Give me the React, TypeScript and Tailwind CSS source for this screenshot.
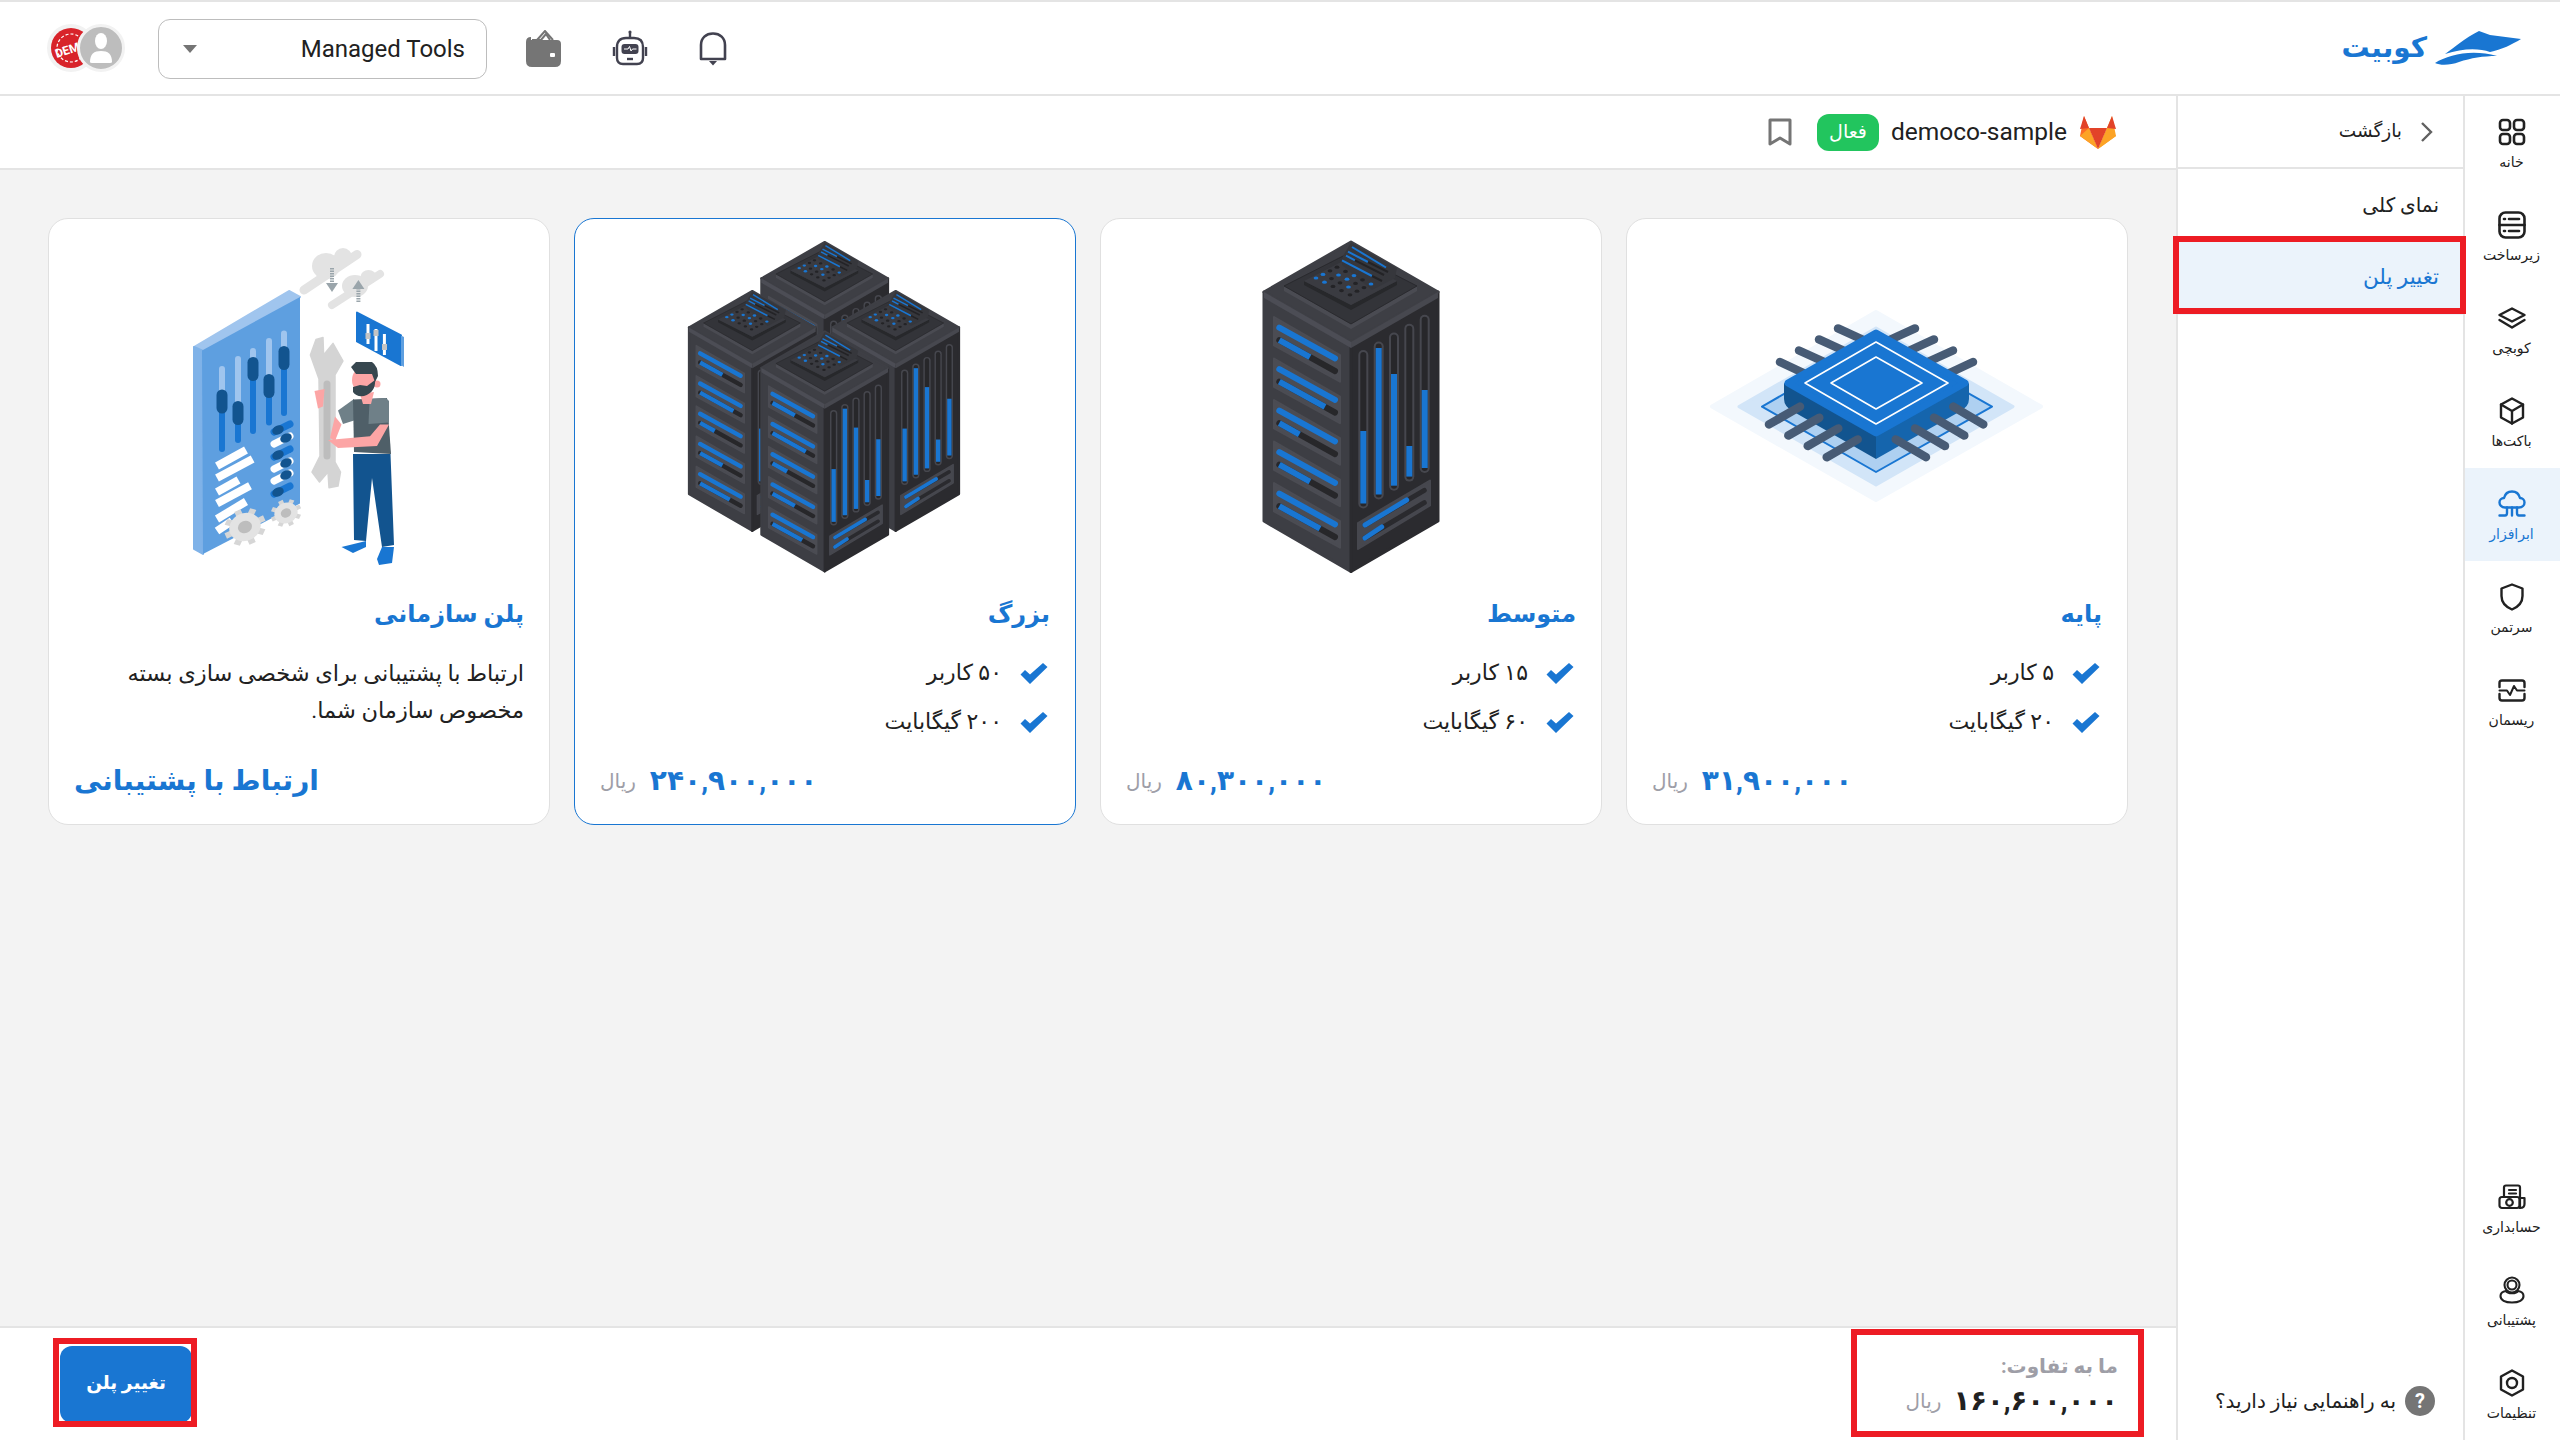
import React from "react";

const BLUE = "#1976d2";

function Pin({ d }: { d: number[] }) {
  return <line x1={d[0]} y1={d[1]} x2={d[2]} y2={d[3]} stroke="#475b75" strokeWidth={8.5} strokeLinecap="round" />;
}

function Chip() {
  const back = [
    [78, 128, 110, 143], [97, 116.5, 129, 131], [117, 105.4, 149, 120], [136, 94.4, 168, 109],
    [213, 94.4, 181, 109], [232, 105.4, 200, 120], [251, 116.5, 219, 131], [271, 128, 239, 143],
  ];
  const front = [
    [67, 190.4, 98, 172.6], [86.3, 201.5, 117.3, 183.7], [105.7, 212, 136.3, 194.4], [124.7, 223.2, 155.7, 205.4],
    [281.3, 190.4, 251.3, 172.6], [262.3, 201.5, 232, 183.7], [243, 212, 213, 194.4], [224, 223.2, 193.7, 205.4],
  ];
  return (
    <svg width="350" height="350" viewBox="0 0 350 350">
      <polygon points="10,172.6 174,78 339,172.6 174,266" fill="#f3f8fd" stroke="#f3f8fd" strokeWidth="4" strokeLinejoin="round" />
      <polygon points="37,172.6 174,94 311,172.6 174,251" fill="#d2e5f8" stroke="#d2e5f8" strokeWidth="3" strokeLinejoin="round" />
      <polygon points="60,172.6 174,107 290,172.6 174,238" fill="#aed0f1" stroke={BLUE} strokeWidth="2" strokeLinejoin="round" />
      {back.map((p, i) => <Pin key={i} d={p} />)}
      <path d="M82 149 L174 201.5 V225 L92 178 Q82 173 82 165 Z" fill="#12548f" />
      <path d="M267 149 L174 201.5 V225 L257 178 Q267 173 267 165 Z" fill="#1565ad" />
      <polygon points="86,149 174,99 263,149 174,199" fill={BLUE} stroke={BLUE} strokeWidth="7" strokeLinejoin="round" />
      <polygon points="103,149 174,108 246,149 174,190" fill="none" stroke="#fff" strokeWidth="1.6" strokeLinejoin="round" />
      <polygon points="129,149 174,123 220,149 174,175" fill="none" stroke="#fff" strokeWidth="1.6" strokeLinejoin="round" />
      {front.map((p, i) => <Pin key={i} d={p} />)}
    </svg>
  );
}

function Tower() {
  const panels = [0.55, 0.82, 0.36, 0.55, 0.73];
  const slots = [
    [187.3, 121, 269.5, 197], [202.7, 112.5, 260.4, 114], [218, 103.5, 251.7, 140],
    [233.3, 94.8, 242.6, 212], [248.7, 85.7, 234, 156],
  ];
  const blues = ["0-0", "1-0", "0-1", "3-1", "1-2", "2-2", "4-3", "2-3", "3-4"];
  const dots: React.ReactNode[] = [];
  for (let i = 0; i < 5; i++) {
    for (let j = 0; j < 4; j++) {
      const x = 140 + i * 8.5 + j * 7;
      const y = 44 + i * 4.2 - j * 3.6;
      dots.push(<ellipse key={`${i}-${j}`} cx={x} cy={y} rx="2.4" ry="1.6" fill={blues.includes(`${i}-${j}`) ? BLUE : "#232326"} />);
    }
  }
  return (
    <g>
      <polygon points="88,58 175,108 175,337.5 88,287" fill="#3d3e44" stroke="#3d3e44" strokeWidth="3" strokeLinejoin="round" />
      <polygon points="175,108 262,58 262,287 175,337.5" fill="#2b2b2f" stroke="#2b2b2f" strokeWidth="3" strokeLinejoin="round" />
      <polygon points="175,8 262,58 175,108 88,58" fill="#3e3f45" stroke="#3e3f45" strokeWidth="3" strokeLinejoin="round" />
      <polygon points="88,58 175,108 175,114 88,64" fill="#4c4d55" />
      <polygon points="262,58 175,108 175,114 262,64" fill="#47484f" />
      <polygon points="108,57 175,95 241,57 241,52 175,90 108,52" fill="#4a4b52" />
      <polygon points="108,52 175,18 241,52 175,90" fill="#333439" stroke="#26262a" strokeWidth="0.8" />
      <polygon points="128,51 175,76 221,51 221,47 175,71 128,47" fill="#27282b" />
      <polygon points="128,47 175,23 221,47 175,71" fill="#3a3b41" />
      <polygon points="167,22 175,8.6 221,34 219,44 196,56 166,31" fill="#36373c" />
      <g stroke={BLUE} strokeWidth="2">
        <line x1="176" y1="13" x2="210" y2="33.5" />
        <line x1="172" y1="17.7" x2="192" y2="28" />
        <line x1="170" y1="21.6" x2="179" y2="26.4" />
        <line x1="166" y1="26.4" x2="196" y2="42" />
      </g>
      <g stroke="#232326" strokeWidth="2">
        <line x1="192" y1="28" x2="212" y2="38" />
        <line x1="179" y1="26.4" x2="208" y2="41" />
        <line x1="196" y1="42" x2="206" y2="47" />
      </g>
      {dots}
      {panels.map((f, i) => {
        const o = i * 41.5;
        const x1 = 103.3, x2 = 159, mid = x1 + (x2 - x1) * f;
        const yAt = (b: number, x: number) => b + ((x - x1) / (x2 - x1)) * 30.8 + o;
        return (
          <g key={i}>
            <polygon points={`98,${83 + o} 164,${121 + o} 164,${147.7 + o} 98,${111.4 + o}`} fill="#4b4c53" stroke="#4b4c53" strokeWidth="2" strokeLinejoin="round" />
            <line x1={x1} y1={yAt(93.6, x1)} x2={x2} y2={yAt(93.6, x2)} stroke={BLUE} strokeWidth="6" strokeLinecap="round" />
            <line x1={x1} y1={yAt(106.2, x1)} x2={x2} y2={yAt(106.2, x2)} stroke="#27272a" strokeWidth="6" strokeLinecap="round" />
            <line x1={x1} y1={yAt(106.2, x1)} x2={mid} y2={yAt(106.2, mid)} stroke={BLUE} strokeWidth="6" />
          </g>
        );
      })}
      {slots.map((s, i) => (
        <g key={i}>
          <line x1={s[0]} y1={s[1]} x2={s[0]} y2={s[2]} stroke="#46474e" strokeWidth="10" strokeLinecap="round" />
          <line x1={s[0]} y1={s[1]} x2={s[0]} y2={s[2]} stroke="#27272a" strokeWidth="6" strokeLinecap="round" />
          <line x1={s[0]} y1={s[3]} x2={s[0]} y2={s[2]} stroke={BLUE} strokeWidth="6" />
        </g>
      ))}
      <polygon points="182,289 254,246.5 254,271.4 182,315" fill="#46474e" stroke="#46474e" strokeWidth="2" strokeLinejoin="round" />
      <line x1="189" y1="291" x2="248.3" y2="256.4" stroke="#2a2a2e" strokeWidth="5" strokeLinecap="round" />
      <line x1="189" y1="304" x2="248.3" y2="268.7" stroke="#2a2a2e" strokeWidth="5" strokeLinecap="round" />
      <line x1="189" y1="291" x2="230.7" y2="266" stroke={BLUE} strokeWidth="5" strokeLinecap="round" />
      <line x1="189" y1="304" x2="205.7" y2="293" stroke={BLUE} strokeWidth="5" strokeLinecap="round" />
    </g>
  );
}

function Single() {
  return (
    <svg width="350" height="350" viewBox="0 0 350 350">
      <Tower />
    </svg>
  );
}

function Cluster() {
  const s = 0.728;
  const at = (x: number, y: number) => `translate(${x - 175 * s} ${y - 8 * s}) scale(${s})`;
  return (
    <svg width="350" height="350" viewBox="0 0 350 350">
      <g transform={at(174.7, 8)}><Tower /></g>
      <g transform={at(102.3, 57)}><Tower /></g>
      <g transform={at(245.7, 57)}><Tower /></g>
      <g transform={at(174.7, 97.5)}><Tower /></g>
    </svg>
  );
}

function Gear({ x, y, r }: { x: number; y: number; r: number }) {
  const teeth = 8;
  return (
    <g transform={`translate(${x} ${y}) rotate(-25) scale(1 0.85)`}>
      {Array.from({ length: teeth }).map((_, i) => (
        <rect key={i} x={-r * 0.18} y={-r * 1.12} width={r * 0.36} height={r * 0.4} fill="#d6d6d6" transform={`rotate(${(i * 360) / teeth})`} />
      ))}
      <circle r={r * 0.85} fill="#e3e3e3" />
      <circle r={r * 0.38} fill="#bdbdbd" />
    </g>
  );
}

function Org() {
  const sliders = [
    [98, 135, 215, 167.5], [114, 125, 206, 179], [129, 117, 197, 135], [145, 107, 188.5, 152], [160, 99.5, 179, 124],
  ];
  const lines = [
    [93, 232, 122, 216], [93, 244, 128.6, 225], [93, 258, 114.5, 246], [93, 269.5, 126, 251.7], [93, 285, 122, 267.5], [93, 297, 108, 287],
  ];
  const toggles: [number, boolean][] = [[194, true], [206, false], [219, true], [231, false], [243, false], [256, true]];
  return (
    <svg width="350" height="350" viewBox="0 0 350 350">
      <line x1="180" y1="56" x2="233" y2="20.5" stroke="#e3e3e3" strokeWidth="9" strokeLinecap="round" />
      <ellipse cx="202" cy="32" rx="14" ry="13" fill="#e3e3e3" />
      <ellipse cx="219" cy="23" rx="9" ry="9" fill="#e3e3e3" />
      <line x1="208" y1="71" x2="256" y2="40" stroke="#e3e3e3" strokeWidth="8" strokeLinecap="round" />
      <ellipse cx="231" cy="52" rx="13" ry="11" fill="#e3e3e3" />
      <ellipse cx="244.5" cy="43" rx="8" ry="7" fill="#e3e3e3" />
      <line x1="208" y1="34" x2="208" y2="50" stroke="#9aa5ab" strokeWidth="4" strokeDasharray="1.5 1" />
      <polygon points="202,49 214,49 208,58" fill="#9aa5ab" />
      <line x1="234.4" y1="54" x2="234.4" y2="69" stroke="#9aa5ab" strokeWidth="4" strokeDasharray="1.5 1" />
      <polygon points="228.4,55 240.4,55 234.4,46" fill="#9aa5ab" />

      <polygon points="70,113 165,57 176,63 78,116.5" fill="#a0c5ee" stroke="#a0c5ee" strokeWidth="2" strokeLinejoin="round" />
      <polygon points="70,113 78,116.5 79,320 70,315" fill="#7fb2e8" stroke="#7fb2e8" strokeWidth="2" strokeLinejoin="round" />
      <polygon points="78,116.5 176,63 176,269.5 79,320" fill="#5e9fe0" />
      {sliders.map((s, i) => (
        <g key={i}>
          <line x1={s[0]} y1={s[1]} x2={s[0]} y2={s[3]} stroke="#a0c5ee" strokeWidth="6" strokeLinecap="round" />
          <line x1={s[0]} y1={s[3]} x2={s[0]} y2={s[2]} stroke={BLUE} strokeWidth="6" strokeLinecap="round" />
          <rect x={s[0] - 5.5} y={s[3] - 12} width="11" height="24" rx="5.5" fill="#12548f" />
        </g>
      ))}
      {lines.map((l, i) => (
        <line key={i} x1={l[0]} y1={l[1]} x2={l[2]} y2={l[3]} stroke="#fff" strokeWidth="8" />
      ))}
      {toggles.map(([y, b], i) => (
        <g key={i}>
          <line x1="150" y1={y + 4} x2="166" y2={y - 4} stroke={b ? BLUE : "#fff"} strokeWidth="7" strokeLinecap="round" />
          <ellipse cx={b ? 154 : 162} cy={b ? y + 2 : y - 2} rx="6" ry="4.5" fill="#12548f" transform={`rotate(-25 ${b ? 154 : 162} ${b ? y + 2 : y - 2})`} />
        </g>
      ))}
      <Gear x={121} y={293} r={19} />
      <Gear x={162} y={279} r={14} />

      <polygon points="192,105.4 199,103.5 199.6,121 209,109.4 219,127 211,141 211,228 216.5,238 214,252 205,253.7 204,238 195.5,248 188,238 196,222 195,145 186.4,121" fill="#d4d4d4" stroke="#d4d4d4" strokeLinejoin="round" strokeWidth="1.5" />
      <line x1="203" y1="150" x2="203" y2="222" stroke="#bdbdbd" strokeWidth="7" strokeLinecap="round" />

      <polygon points="229,220 266.5,220 270,311 258,313 248,244 242,307 230,306" fill="#12548f" />
      <polygon points="217.5,313 242,307 242,313 229,319" fill={BLUE} />
      <polygon points="258,313 270,313 268,329 255,331 253,325" fill={BLUE} />
      <polygon points="214,176.6 230,165 230,186.5 219,190" fill="#6f8088" />
      <polygon points="229,165.5 263,164 267,220 230,218" fill="#4f5f68" />
      <polygon points="245.6,165 262,164 265,167 265,188.5 244.5,190" fill="#6f8088" />
      <polygon points="204,206 246,202.3 256,190.4 265,190.4 253,212 214,214" fill="#fca5a5" />
      <polygon points="190.5,157 200.6,155 199,172.6 194,174.6" fill="#fca5a5" />
      <polygon points="211,182.5 217.5,190.4 211,207 206,204" fill="#fca5a5" />
      <polygon points="236,160 250,158 247,170 239,170" fill="#fca5a5" />
      <ellipse cx="240" cy="146" rx="12" ry="13" fill="#fca5a5" />
      <circle cx="253" cy="150" r="3.5" fill="#fca5a5" />
      <path d="M227 133 L232 128 L248 128 Q254 132 254 142 L251 148 L248 140 L232 140 Z" fill="#37474f" />
      <path d="M229 153 L236 151 L243 152 L251 146 Q252 158 240 162 Q232 163 229 158 Z" fill="#37474f" />

      <polygon points="233,78.6 277,101.5 277,131 233,107.4" fill={BLUE} stroke={BLUE} strokeWidth="2" strokeLinejoin="round" />
      <polygon points="277,101.5 280,103 280,133 277,131" fill="#5e9fe0" />
      <g stroke="#fff" strokeWidth="3">
        <line x1="244" y1="90" x2="244" y2="110" />
        <line x1="252" y1="95" x2="252" y2="117" />
        <line x1="260.4" y1="100" x2="260.4" y2="121" />
      </g>
      <g fill="#c4c4c4">
        <rect x="241.5" y="99" width="5" height="6" />
        <rect x="249.5" y="96" width="5" height="6" />
        <rect x="258" y="110" width="5" height="6" />
      </g>
    </svg>
  );
}

function Check() {
  return (
    <svg width="28" height="23" viewBox="0 0 28 23" className="mt-[10px]">
      <path d="M0.5 12.5 L10 22 L27.5 5 L23 1 L10 12.5 L5 8 Z" fill={BLUE} />
    </svg>
  );
}

function Price({ value }: { value: string }) {
  return (
    <div className="mt-auto h-[44px] mb-[21px] flex items-center justify-end gap-[14px] pl-[25px]">
      <span className="text-[28px] font-bold text-[#1976d2]">{value}</span>
      <span className="text-[20px] text-[#9e9ea7]">ریال</span>
    </div>
  );
}

function PlanCard({ title, art, users, size, price, active }: { title: string; art: React.ReactNode; users: string; size: string; price: string; active?: boolean }) {
  return (
    <div className={`w-[502px] h-[607px] rounded-[20px] border bg-white flex flex-col ${active ? "border-[#1976d2]" : "border-[#e0e0e0]"}`}>
      <div className="mt-[15px] h-[350px] flex justify-center">{art}</div>
      <div className="mt-[10px] h-[40px] px-[25px] flex items-center text-[24px] font-bold text-[#1976d2]">{title}</div>
      <div className="mt-[18px] px-[27px] flex flex-col">
        <div className="h-[49px] flex items-start gap-[18px]">
          <Check />
          <span className="text-[22px] leading-[42px] text-[#212121]">{users}</span>
        </div>
        <div className="h-[49px] flex items-start gap-[18px]">
          <Check />
          <span className="text-[22px] leading-[42px] text-[#212121]">{size}</span>
        </div>
      </div>
      <Price value={price} />
    </div>
  );
}

function OrgCard() {
  return (
    <div className="w-[502px] h-[607px] rounded-[20px] border border-[#e0e0e0] bg-white flex flex-col">
      <div className="mt-[15px] h-[350px] flex justify-center"><Org /></div>
      <div className="mt-[10px] h-[40px] px-[25px] flex items-center text-[24px] font-bold text-[#1976d2]">پلن سازمانی</div>
      <p className="mt-[21px] px-[25px] text-[22.5px] leading-[37px] text-[#212121]">ارتباط با پشتیبانی برای شخصی سازی بسته مخصوص سازمان شما.</p>
      <div className="mt-auto h-[44px] mb-[21px] px-[25px] flex items-center justify-end text-[28px] font-bold text-[#1976d2]">ارتباط با پشتیبانی</div>
    </div>
  );
}

const ic = { fill: "none", stroke: "currentColor", strokeWidth: 2.2, strokeLinecap: "round", strokeLinejoin: "round" } as const;

const icons: Record<string, React.ReactNode> = {
  home: (
    <svg width="28" height="28" viewBox="0 0 28 28" {...ic} strokeWidth={2.6}>
      <rect x="2" y="2" width="10" height="10" rx="3" /><rect x="16" y="2" width="10" height="10" rx="3" />
      <rect x="2" y="16" width="10" height="10" rx="3" /><rect x="16" y="16" width="10" height="10" rx="3" />
    </svg>
  ),
  infra: (
    <svg width="28" height="28" viewBox="0 0 28 28" {...ic} strokeWidth={2.6}>
      <rect x="1.5" y="1.5" width="25" height="25" rx="6" /><line x1="1.5" y1="14" x2="26.5" y2="14" />
      <line x1="6" y1="8" x2="7" y2="8" /><line x1="11" y1="8" x2="21" y2="8" />
      <line x1="6" y1="20" x2="7" y2="20" /><line x1="11" y1="20" x2="21" y2="20" />
    </svg>
  ),
  layers: (
    <svg width="28" height="22" viewBox="0 0 28 22" {...ic} strokeWidth={2.4}>
      <polygon points="14,1.5 26.5,8 14,14.5 1.5,8" />
      <path d="M1.5 13 L14 20.5 L26.5 13" />
    </svg>
  ),
  cube: (
    <svg width="28" height="28" viewBox="0 0 28 28" {...ic} strokeWidth={2.4}>
      <path d="M14 1.5 L25 7.5 V20.5 L14 26.5 L3 20.5 V7.5 Z" />
      <path d="M3 7.5 L14 14 L25 7.5 M14 14 V26.5" />
    </svg>
  ),
  cloud: (
    <svg width="28" height="28" viewBox="0 0 28 28" {...ic} strokeWidth={2.4}>
      <path d="M7 17.5 C3.5 17.5 1.5 15 1.5 12.5 C1.5 10 3.5 8 6 8 C7 4 10 1.5 14 1.5 C18 1.5 21 4 22 8 C24.5 8 26.5 10 26.5 12.5 C26.5 15 24.5 17.5 21 17.5 Z" />
      <path d="M1.5 25.5 H7 Q9 25.5 9 23 V17.5 M26.5 25.5 H21 Q19 25.5 19 23 V17.5 M14 17.5 V25.5" />
    </svg>
  ),
  shield: (
    <svg width="24" height="28" viewBox="0 0 24 28" {...ic} strokeWidth={2.4}>
      <path d="M12 1.5 L22.5 5.5 V13 C22.5 20 18 24 12 26.5 C6 24 1.5 20 1.5 13 V5.5 Z" />
    </svg>
  ),
  pulse: (
    <svg width="28" height="23" viewBox="0 0 28 23" {...ic} strokeWidth={2.4}>
      <path d="M1.5 8 V4 Q1.5 1.5 4 1.5 H24 Q26.5 1.5 26.5 4 V8 M1.5 15 V19 Q1.5 21.5 4 21.5 H24 Q26.5 21.5 26.5 19 V15" />
      <path d="M1.5 11.5 H9 L12 16 L16 7 L19 11.5 H26.5" strokeWidth={2} />
    </svg>
  ),
  money: (
    <svg width="28" height="26" viewBox="0 0 28 26" {...ic} strokeWidth={2.2}>
      <path d="M6 12 V3.5 Q6 1.5 8 1.5 H20 Q22 1.5 22 3.5 V24" />
      <line x1="11" y1="6" x2="18" y2="6" /><line x1="11" y1="9.5" x2="18" y2="9.5" />
      <rect x="1.5" y="13" width="20" height="11" rx="2.5" />
      <circle cx="11.5" cy="18.5" r="3.3" />
      <path d="M22 14 H26.5 V20 Q26.5 24 22 24" />
    </svg>
  ),
  support: (
    <svg width="26" height="28" viewBox="0 0 26 28" {...ic} strokeWidth={2.1}>
      <circle cx="13" cy="9" r="7.5" /><circle cx="13" cy="9" r="4.5" />
      <path d="M7 15 C3 15.5 1.5 18 1.5 20 C1.5 24 6 26.5 13 26.5 C20 26.5 24.5 24 24.5 20 C24.5 18 23 15.5 19 15 C17.5 18 8.5 18 7 15 Z" />
    </svg>
  ),
  settings: (
    <svg width="26" height="28" viewBox="0 0 26 28" {...ic} strokeWidth={2.4}>
      <polygon points="13,1.5 24,7.5 24,20.5 13,26.5 2,20.5 2,7.5" /><circle cx="13" cy="14" r="5" />
    </svg>
  ),
};

function RailItem({ icon, label, active }: { icon: string; label: string; active?: boolean }) {
  return (
    <div className={`h-[93px] pr-[2px] flex flex-col items-center ${active ? "bg-[#ebf3fb] text-[#1976d2]" : "text-[#212121]"}`}>
      <div className="mt-[22px] h-[28px] w-full flex items-center justify-center">{icons[icon]}</div>
      <div className="mt-[6px] h-[20px] text-[14px] leading-[20px]" dir="rtl">{label}</div>
    </div>
  );
}

export default function App() {
  return (
    <div className="relative w-[2560px] h-[1440px] overflow-hidden bg-white flex flex-col font-['Roboto','DejaVu_Sans',sans-serif]">
      <header className="h-[96px] shrink-0 border-t-2 border-b-2 border-[#e4e4e4] flex items-center justify-between pl-[47px] pr-[39px]">
        <div className="flex items-center">
          <div className="relative w-[78px] h-[48px]">
            <svg width="48" height="48" viewBox="0 0 48 48" className="absolute left-0 top-0">
              <circle cx="24" cy="24" r="24" fill="#f2f2f2" />
              <circle cx="24" cy="24" r="20" fill="#d8232a" />
              <circle cx="24" cy="24" r="14" fill="none" stroke="#fff" strokeWidth="1.2" strokeDasharray="3 2" />
              <text x="24" y="29" textAnchor="middle" fontSize="12" fontWeight="700" fill="#fff" transform="rotate(-18 24 24)">DEMO</text>
            </svg>
            <div className="absolute left-[30px] top-0 w-[48px] h-[48px] rounded-full bg-[#bdbdbd] border-[3px] border-[#f2f2f2] flex items-center justify-center">
              <svg width="30" height="34" viewBox="0 0 30 34" fill="#fff">
                <ellipse cx="15" cy="10" rx="6" ry="8" />
                <path d="M4 31 C4 23 8 20 15 20 C22 20 26 23 26 31 Q26 32 24 32 H6 Q4 32 4 31 Z" />
              </svg>
            </div>
          </div>
          <div className="ml-[33px] mt-[2px] w-[329px] h-[60px] rounded-[12px] border border-[#bdbdbd] flex items-center justify-between pl-[24px] pr-[21px]">
            <svg width="14" height="8" viewBox="0 0 14 8"><polygon points="0,0 14,0 7,8" fill="#757575" /></svg>
            <span className="text-[24px] text-[#212121]">Managed Tools</span>
          </div>
          <div className="ml-[39px] w-[36px] h-[36px]">
            <svg width="36" height="37" viewBox="0 0 36 37">
              <path d="M11 10 L19 1 L27 10" fill="none" stroke="#757575" strokeWidth="2" />
              <path d="M6 10 L15 10 L20 4 L24 10" fill="none" stroke="#757575" strokeWidth="2" />
              <path d="M0 12 Q0 7 5 7 V10 H31 Q35 10 35 14 V31 Q35 37 29 37 H6 Q0 37 0 31 Z" fill="#757575" />
              <rect x="24" y="23" width="5" height="4" rx="1" fill="#fff" />
            </svg>
          </div>
          <div className="ml-[50px] w-[36px] h-[36px]">
            <svg width="36" height="36" viewBox="0 0 36 36" fill="none" stroke="#424250" strokeWidth="2.4">
              <line x1="18" y1="3" x2="18" y2="8" /><circle cx="18" cy="2" r="1.6" fill="#424250" stroke="none" />
              <path d="M5 17 Q5 8 14 8 H22 Q31 8 31 17 V28 Q31 34 25 34 H11 Q5 34 5 28 Z" />
              <path d="M2 17 V26 M34 17 V26" />
              <rect x="9.5" y="14" width="17" height="10" rx="3" fill="#424250" stroke="none" />
              <path d="M12 19 H16 L17.5 16.5 L19 21 L20.5 19 H24.5" stroke="#fff" strokeWidth="1" />
              <line x1="15" y1="29" x2="21" y2="29" />
            </svg>
          </div>
          <div className="ml-[50px] mt-[2px] w-[30px] h-[34px]">
            <svg width="30" height="34" viewBox="0 0 30 34" fill="none" stroke="#424250" strokeWidth="2.6">
              <path d="M3 27 V13 C3 6 8 1.5 15 1.5 C22 1.5 27 6 27 13 V27 Z" strokeLinejoin="round" />
              <polygon points="11,29 19,29 15,33.5" fill="#424250" stroke="none" />
            </svg>
          </div>
        </div>
        <div className="flex items-center gap-[8px]">
          <span className="text-[28px] font-bold text-[#1976d2] leading-none" dir="rtl">کوبیت</span>
          <svg width="86" height="34" viewBox="0 0 86 34" fill="#1976d2">
            <path d="M10 23 C20 16 30 7 44 0 L55 4 L86 8 C78 13 66 19 55 21 C44 17 28 17 10 23 Z" />
            <path d="M0 32 C14 23 38 18 62 25 C48 25 36 27 24 31 C16 34 6 35 0 32 Z" />
          </svg>
        </div>
      </header>

      <div className="flex-1 flex min-h-0">
        <main className="w-[2176px] shrink-0 flex flex-col">
          <div className="h-[74px] shrink-0 border-b-2 border-[#e4e4e4] flex items-center justify-end pr-[60px]">
            <svg width="24" height="28" viewBox="0 0 24 28" fill="none" stroke="#757575" strokeWidth="3" strokeLinejoin="round" className="mr-[25px]">
              <path d="M2 2 H22 V26 L12 20 L2 26 Z" />
            </svg>
            <span className="w-[62px] h-[37px] rounded-[12px] bg-[#22c55e] text-white text-[19px] flex items-center justify-center mr-[12px]" dir="rtl">فعال</span>
            <span className="text-[24.5px] text-[#212121] mr-[13px]">democo-sample</span>
            <svg width="36" height="33" viewBox="0 0 36 33">
              <polygon points="18,33 0,20 4,0 9,12" fill="#fc6d26" />
              <polygon points="18,33 36,20 32,0 27,12" fill="#fca326" />
              <polygon points="18,33 0,20 9,12" fill="#fca326" />
              <polygon points="18,33 36,20 27,12" fill="#fca326" />
              <polygon points="4,0 9,12 0,13" fill="#e24329" />
              <polygon points="32,0 27,12 36,13" fill="#e24329" />
              <polygon points="9,12 27,12 18,33" fill="#e24329" />
            </svg>
          </div>
          <div className="flex-1 bg-[#f3f3f3] px-[48px] pt-[48px]">
            <div className="flex gap-[24px]" dir="rtl">
              <PlanCard title="پایه" art={<Chip />} users="۵ کاربر" size="۲۰ گیگابایت" price="۳۱,۹۰۰,۰۰۰" />
              <PlanCard title="متوسط" art={<Single />} users="۱۵ کاربر" size="۶۰ گیگابایت" price="۸۰,۳۰۰,۰۰۰" />
              <PlanCard title="بزرگ" art={<Cluster />} users="۵۰ کاربر" size="۲۰۰ گیگابایت" price="۲۴۰,۹۰۰,۰۰۰" active />
              <OrgCard />
            </div>
          </div>
          <div className="h-[114px] shrink-0 border-t-2 border-[#e4e4e4] flex items-center justify-between pl-[60px] pr-[58px]">
            <button className="w-[132px] h-[77px] rounded-[12px] bg-[#1976d2] text-white text-[18.5px] font-bold" dir="rtl">تغییر پلن</button>
            <div className="flex flex-col items-end" dir="rtl">
              <div className="w-full text-[20px] font-bold text-[#9e9ea7] leading-[34px]">ما به تفاوت:</div>
              <div className="flex items-center gap-[12px] leading-[36px]">
                <span className="text-[27.5px] font-bold text-[#212121]">۱۶۰,۶۰۰,۰۰۰</span>
                <span className="text-[20px] text-[#9e9ea7]">ریال</span>
              </div>
            </div>
          </div>
        </main>

        <aside className="w-[287px] shrink-0 border-l-2 border-[#e4e4e4] flex flex-col" dir="rtl">
          <div className="h-[73px] shrink-0 border-b-2 border-[#e4e4e4] flex items-center pr-[30px] gap-[18px]">
            <svg width="13" height="20" viewBox="0 0 13 20" fill="none" stroke="#616161" strokeWidth="2.4"><path d="M2 1 L11 10 L2 19" /></svg>
            <span className="text-[18.5px] text-[#212121]">بازگشت</span>
          </div>
          <div className="h-[71px] shrink-0 flex items-center pr-[24px] text-[20px] text-[#212121]">نمای کلی</div>
          <div className="h-[75px] shrink-0 flex items-center pr-[24px] text-[21.5px] text-[#1976d2] bg-[#ebf3fb]">تغییر پلن</div>
          <div className="mt-auto mb-[24px] pr-[28px] flex items-center gap-[9px]">
            <span className="w-[30px] h-[30px] rounded-full bg-[#757575] text-white text-[20px] font-bold flex items-center justify-center">?</span>
            <span className="text-[20px] text-[#212121]">به راهنمایی نیاز دارید؟</span>
          </div>
        </aside>

        <nav className="w-[97px] shrink-0 border-l-2 border-[#e4e4e4] flex flex-col justify-between">
          <div>
            <RailItem icon="home" label="خانه" />
            <RailItem icon="infra" label="زیرساخت" />
            <RailItem icon="layers" label="کوبچی" />
            <RailItem icon="cube" label="باکت‌ها" />
            <RailItem icon="cloud" label="ابرافزار" active />
            <RailItem icon="shield" label="سرتمن" />
            <RailItem icon="pulse" label="ریسمان" />
          </div>
          <div>
            <RailItem icon="money" label="حسابداری" />
            <RailItem icon="support" label="پشتیبانی" />
            <RailItem icon="settings" label="تنظیمات" />
          </div>
        </nav>
      </div>

      <div className="absolute left-[2173px] top-[236px] w-[293px] h-[78px] border-[6px] border-[#ed1c24] pointer-events-none" />
      <div className="absolute left-[1851px] top-[1329px] w-[293px] h-[108px] border-[6px] border-[#ed1c24] pointer-events-none" />
      <div className="absolute left-[53px] top-[1338px] w-[144px] h-[89px] border-[6px] border-[#ed1c24] pointer-events-none" />
    </div>
  );
}
